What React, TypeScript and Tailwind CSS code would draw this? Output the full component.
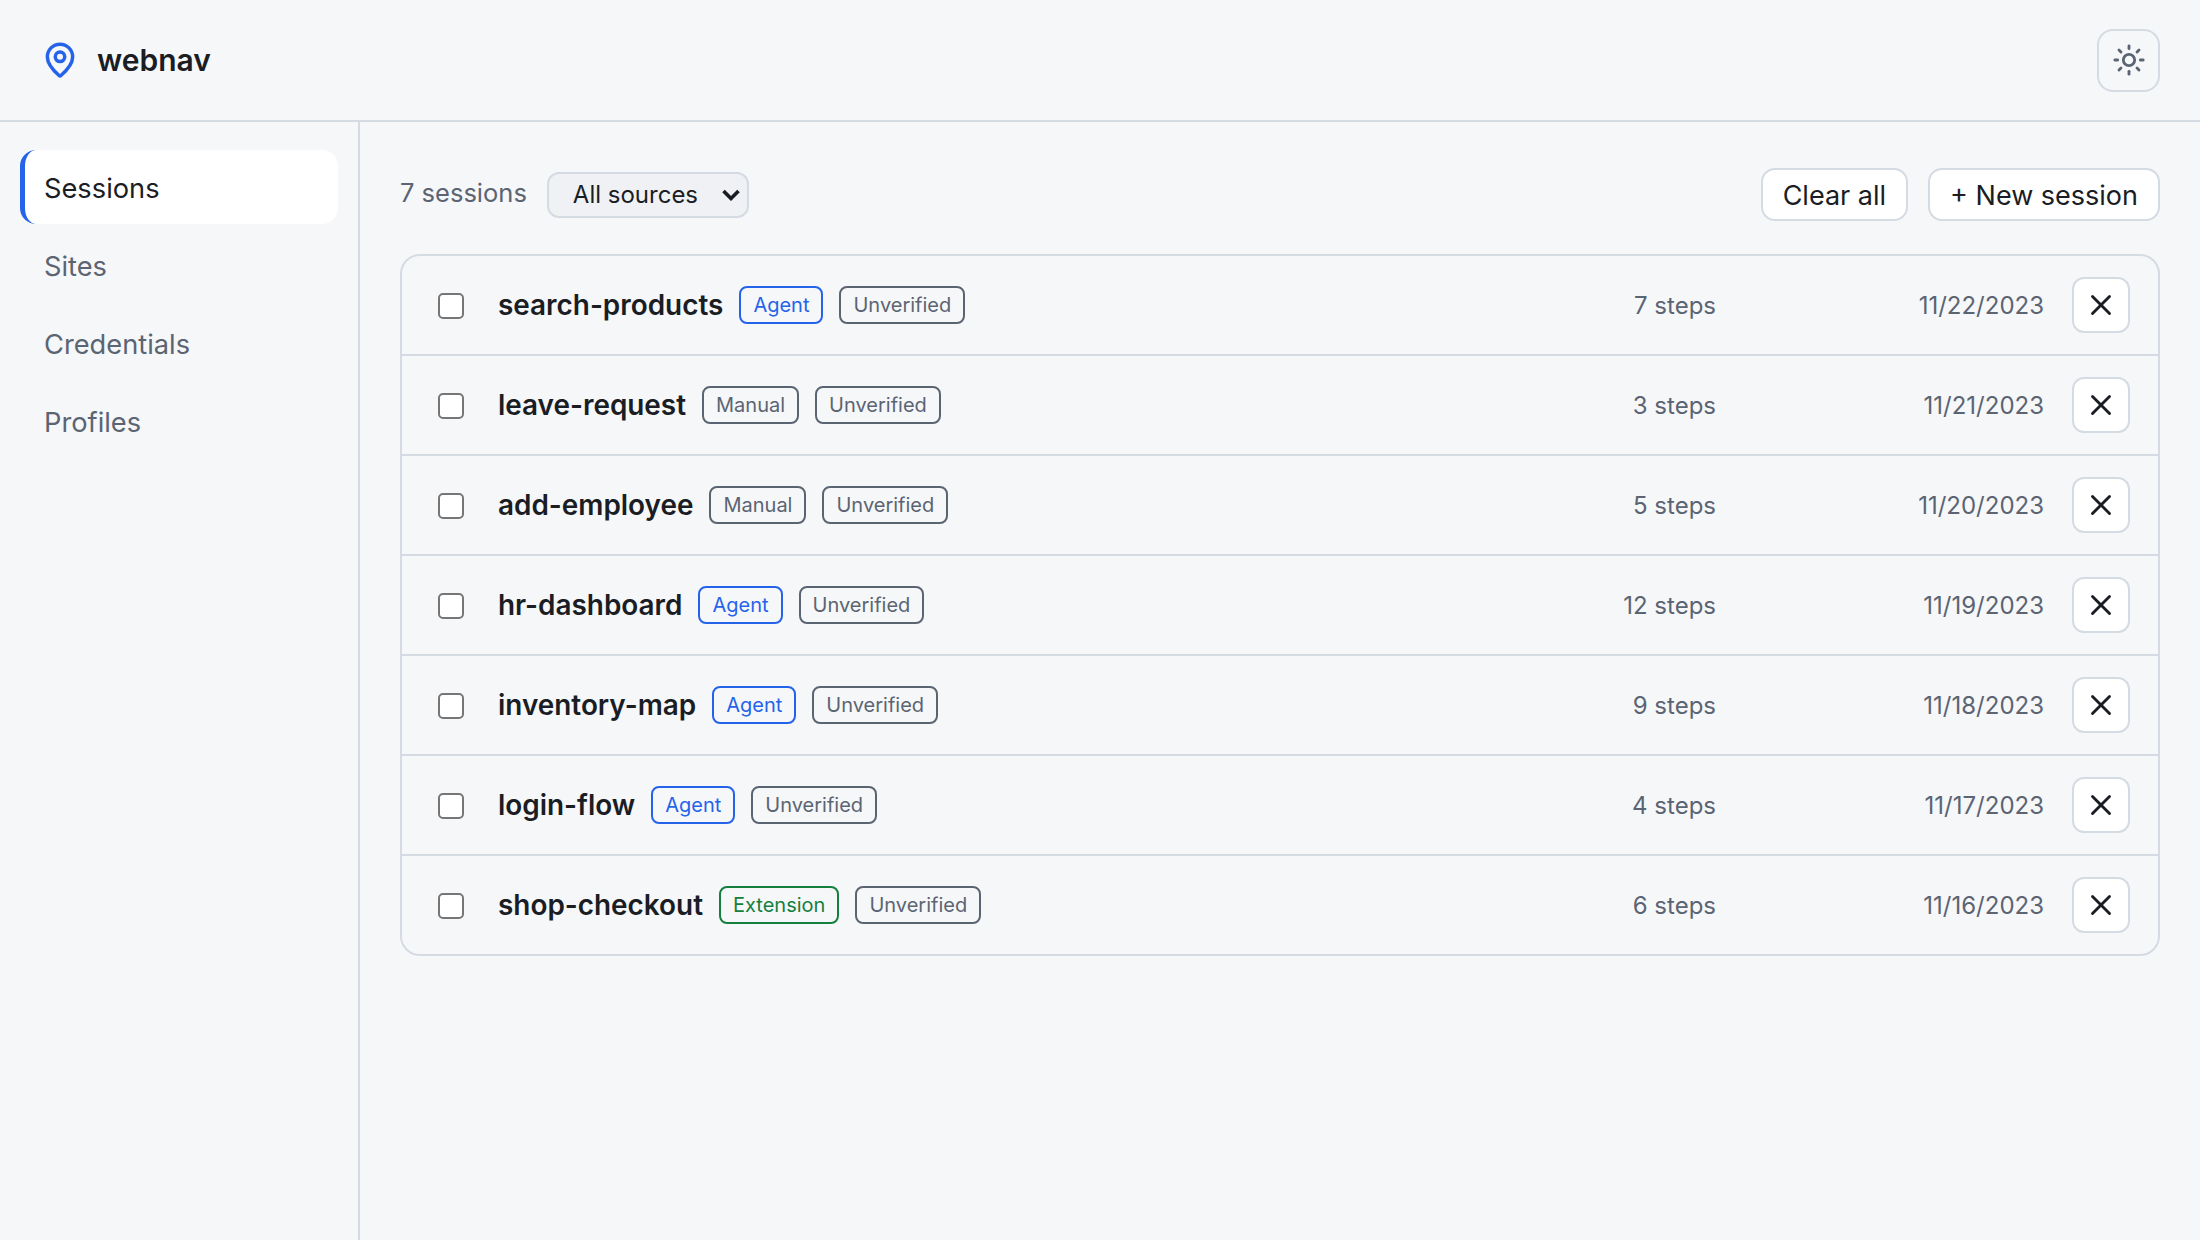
import React from 'react';
import { MapPin, Sun, X } from 'lucide-react';

const sessions = [
  { name: 'search-products', source: 'Agent', steps: 7, date: '11/22/2023' },
  { name: 'leave-request', source: 'Manual', steps: 3, date: '11/21/2023' },
  { name: 'add-employee', source: 'Manual', steps: 5, date: '11/20/2023' },
  { name: 'hr-dashboard', source: 'Agent', steps: 12, date: '11/19/2023' },
  { name: 'inventory-map', source: 'Agent', steps: 9, date: '11/18/2023' },
  { name: 'login-flow', source: 'Agent', steps: 4, date: '11/17/2023' },
  { name: 'shop-checkout', source: 'Extension', steps: 6, date: '11/16/2023' },
];

const sourceClasses: Record<string, string> = {
  Agent: 'border-[#2563eb] text-[#2563eb]',
  Manual: 'border-[#5b6472] text-[#5b6472]',
  Extension: 'border-[#15803d] text-[#15803d]',
};

const Badge: React.FC<{ className: string; children: React.ReactNode }> = ({ className, children }) => (
  <span className={`h-[38px] px-[12px] flex items-center border-2 rounded-[8px] text-[20px] ${className}`}>{children}</span>
);

const App: React.FC = () => {
  return (
    <div className="h-[1240px] flex flex-col bg-[#f6f7f9] text-[#1a1d24] font-['Inter',sans-serif] overflow-hidden">
      {/* Header */}
      <header className="h-[122px] shrink-0 flex items-center justify-between pl-[41px] pr-[40px] border-b-2 border-[#d5dbe2]">
        <div className="flex items-center gap-[18px]">
          <MapPin size={38} strokeWidth={2.2} className="text-[#2563eb]" />
          <span className="text-[30px] font-semibold pt-[1px]">webnav</span>
        </div>
        <button className="w-[63px] h-[63px] flex items-center justify-center border-2 border-[#d5dbe2] rounded-[16px] text-[#5b6472]">
          <Sun size={34} strokeWidth={2} />
        </button>
      </header>

      <div className="flex-1 flex min-h-0">
        {/* Sidebar */}
        <aside className="w-[360px] shrink-0 border-r-2 border-[#d5dbe2] pt-[28px] px-[20px] flex flex-col gap-[4px]">
          <div className="h-[74px] flex items-center pl-[19px] pt-[4px] bg-white border-l-[5px] border-[#2563eb] rounded-[16px] text-[27.25px]">Sessions</div>
          {['Sites', 'Credentials', 'Profiles'].map(item => (
            <div key={item} className="h-[74px] flex items-center pl-[19px] pt-[4px] border-l-[5px] border-transparent rounded-[16px] text-[27.25px] text-[#5b6472]">{item}</div>
          ))}
        </aside>

        {/* Main */}
        <main className="flex-1 pt-[46px] px-[40px]">
          <div className="flex items-center justify-between mb-[33px]">
            <div className="flex items-center gap-[20px]">
              <span className="text-[25.5px] text-[#5b6472] -mt-[3px]">7 sessions</span>
              <div className="relative">
                <select className="block appearance-none w-[202px] h-[46px] pl-[24px] bg-[#eff1f4] border-2 border-[#d5dbe2] rounded-[12px] text-[24px]">
                  <option>All sources</option>
                </select>
                <svg width="18" height="12" viewBox="0 0 18 12" fill="none" stroke="#1a1d24" strokeWidth="3.6" className="absolute right-[9px] top-[17px] pointer-events-none">
                  <path d="M1.5 2 L9 9.5 L16.5 2" />
                </svg>
              </div>
            </div>
            <div className="flex items-center gap-[20px]">
              <button className="h-[53px] px-[20px] pt-[4px] bg-white border-2 border-[#d5dbe2] rounded-[14px] text-[27px]">Clear all</button>
              <button className="h-[53px] px-[20px] pt-[4px] bg-white border-2 border-[#d5dbe2] rounded-[14px] text-[27px]">+ New session</button>
            </div>
          </div>

          <div className="border-2 border-[#d5dbe2] rounded-[20px] divide-y-2 divide-[#d5dbe2]">
            {sessions.map(s => (
              <div key={s.name} className="h-[100px] last:h-[98px] flex items-center pl-[36px] pr-[28px]">
                <input type="checkbox" className="appearance-none w-[26px] h-[26px] mt-[1px] bg-white border-2 border-[#767676] rounded-[5px]" />
                <span className="ml-[34px] mr-[16px] pt-[1px] text-[27.9px] font-semibold">{s.name}</span>
                <div className="flex-1 flex items-center gap-[16px]">
                  <Badge className={sourceClasses[s.source]}>{s.source}</Badge>
                  <Badge className="border-[#5b6472] text-[#5b6472]">Unverified</Badge>
                </div>
                <span className="w-[140px] pt-[1px] text-right text-[24px] text-[#5b6472]">{s.steps} steps</span>
                <span className="w-[328px] pt-[1px] text-right text-[24px] text-[#5b6472]">{s.date}</span>
                <button className="ml-[28px] w-[58px] h-[56px] flex items-center justify-center bg-white border-2 border-[#d5dbe2] rounded-[12px]">
                  <X size={34} strokeWidth={2} />
                </button>
              </div>
            ))}
          </div>
        </main>
      </div>
    </div>
  );
};

export default App;
